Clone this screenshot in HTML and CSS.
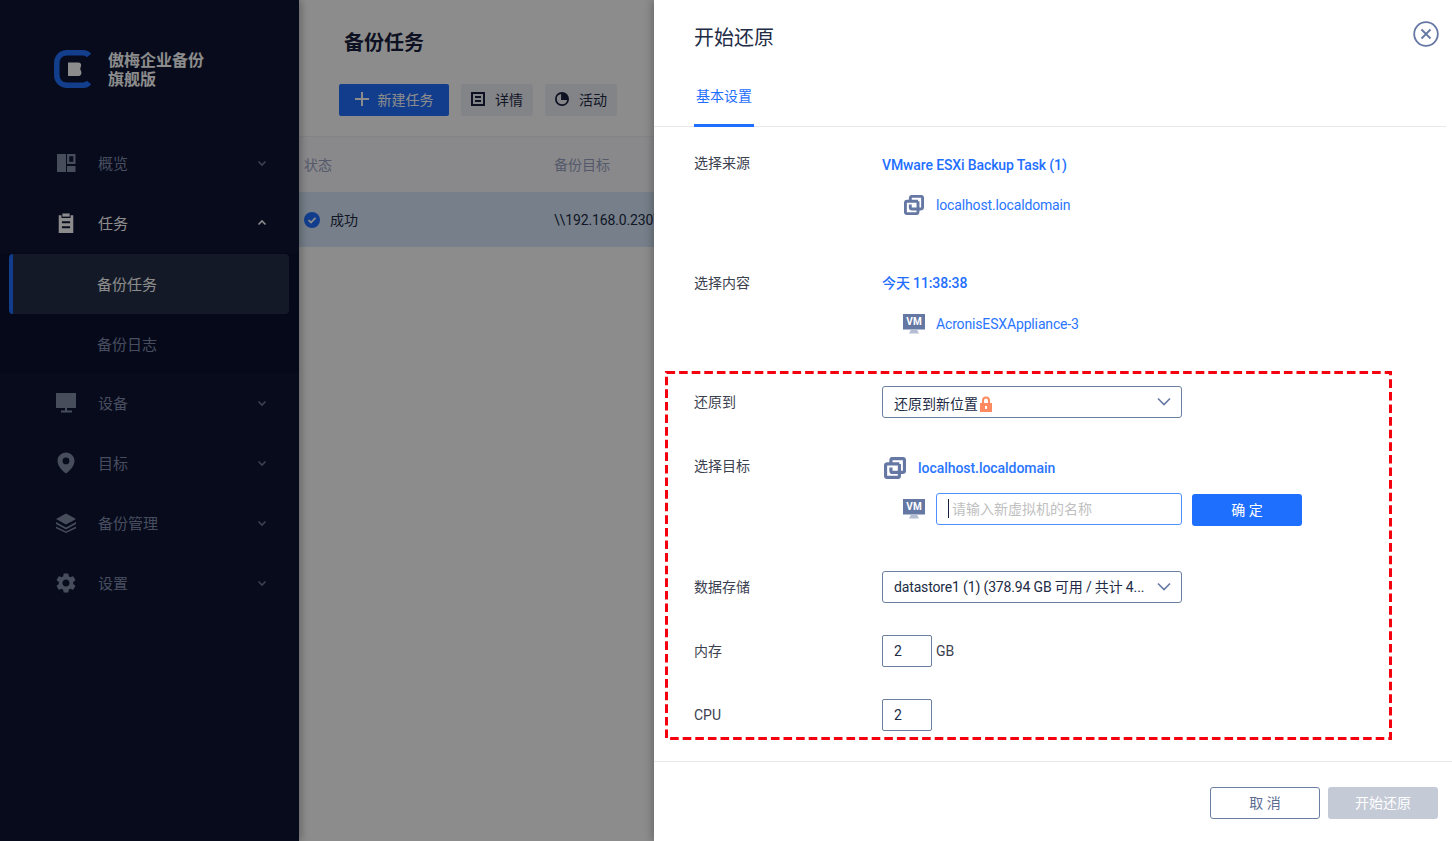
FILE: index.html
```html
<!DOCTYPE html>
<html lang="zh-CN">
<head>
<meta charset="utf-8">
<title>开始还原</title>
<link rel="stylesheet" href="styles.css">
</head>
<body>
<svg class="defs" width="0" height="0">
  <symbol id="chev" viewBox="0 0 12 12"><path d="M2.500 4.500 6 8l3.500-3.500" fill="none" stroke="currentColor" stroke-width="1.600"/></symbol>
  <symbol id="chev-lg" viewBox="0 0 14 14"><path d="M1 3.500 7 9.500l6-6" fill="none" stroke="currentColor" stroke-width="1.600"/></symbol>
  <symbol id="server" viewBox="0 0 20 20"><g fill="none" stroke="#6577a3" stroke-width="2.900" stroke-linejoin="round"><path d="M14 6.300H3a1.600 1.600 0 0 0-1.600 1.600V17a1.600 1.600 0 0 0 1.600 1.600h9.400A1.600 1.600 0 0 0 14 17V6.300"/><path d="M6.300 6V3a1.600 1.600 0 0 1 1.600-1.600H17A1.600 1.600 0 0 1 18.600 3v9.500A1.600 1.600 0 0 1 17 14H7.900a1.600 1.600 0 0 1-1.600-1.600V9.500"/></g></symbol>
  <symbol id="vm" viewBox="0 0 22 20"><rect width="22" height="15.500" fill="#6577a3"/><path d="M8 15.500h6l2 4H6Z" fill="#b4bdd3"/></symbol>
</svg>
<div class="app">
  <aside class="sidebar">
    <div class="brand">
      <svg class="brand-logo" viewBox="0 0 37 38"><path d="M35 5.500C33.500 3.500 31.500 2.800 29 2.800H13C7 2.800 2.800 7 2.800 13v12c0 6 4.200 10.200 10.200 10.200H29c2.500 0 4.500-.7 6-2.700" fill="none" stroke="#2272ff" stroke-width="5.500"/><path d="M14 12.500h10c2.500 0 3.500 1.500 3 3.500l-.8 3 1 2.500c.8 2.500-.5 4.500-3 4.500H14Z" fill="#fff"/></svg>
      <div class="brand-name">傲梅企业备份<br>旗舰版</div>
    </div>
    <nav class="nav">
      <div class="nav-item">
        <svg class="nav-icon" viewBox="0 0 20 20"><path fill-rule="evenodd" d="M1 1h9v18H1Zm10 0h8.500v10H11Zm2.300 2.300v5.400h4V3.300ZM11 13h8.500v6H11Z"/></svg>
        <span class="nav-text">概览</span>
        <svg class="nav-chev"><use href="#chev"/></svg>
      </div>
      <div class="nav-item is-open">
        <svg class="nav-icon" viewBox="0 0 20 22"><path d="M6 .5h8V4H6Z"/><path fill-rule="evenodd" d="M2 2.500h3V5.500h10V2.500h3V22H2ZM5.500 9v2.400h9V9ZM5.500 14.500v2.400h9v-2.400Z"/></svg>
        <span class="nav-text">任务</span>
        <svg class="nav-chev nav-chev-up"><use href="#chev"/></svg>
      </div>
      <div class="subnav">
        <div class="sub-item is-active">备份任务</div>
        <div class="sub-item">备份日志</div>
      </div>
      <div class="nav-item">
        <svg class="nav-icon" viewBox="0 0 20 20"><path d="M0 0h20v15H11v2.500h5V19.500H5v-2H9V15H0Z"/></svg>
        <span class="nav-text">设备</span>
        <svg class="nav-chev"><use href="#chev"/></svg>
      </div>
      <div class="nav-item">
        <svg class="nav-icon nav-icon-pin" viewBox="0 0 20 22"><path fill-rule="evenodd" d="M10 .5c4.700 0 8.500 3.700 8.500 8.400 0 5-5 9.800-8.500 12.600C6.500 18.700 1.500 13.900 1.500 8.900 1.500 4.200 5.300.5 10 .5Zm0 5a3.400 3.400 0 1 0 0 6.800 3.400 3.400 0 0 0 0-6.800Z"/></svg>
        <span class="nav-text">目标</span>
        <svg class="nav-chev"><use href="#chev"/></svg>
      </div>
      <div class="nav-item">
        <svg class="nav-icon" viewBox="0 0 20 20"><path d="M10 .5l10 5.500-10 5.500L0 6Z"/><path d="M0 9l10 5.500L20 9v2l-10 5.500L0 11Z"/><path d="M0 13.500l10 5 10-5v1.800l-10 4.700L0 15.300Z"/></svg>
        <span class="nav-text">备份管理</span>
        <svg class="nav-chev"><use href="#chev"/></svg>
      </div>
      <div class="nav-item">
        <svg class="nav-icon" viewBox="2.500 2 19 20"><path d="M19.140 12.940c.04-.3.06-.61.06-.94 0-.32-.02-.64-.07-.94l2.030-1.580a.49.49 0 0 0 .12-.61l-1.920-3.320a.49.49 0 0 0-.59-.22l-2.390.96c-.5-.38-1.030-.7-1.620-.94l-.36-2.540a.48.48 0 0 0-.48-.41h-3.840c-.24 0-.43.17-.47.41l-.36 2.540c-.59.24-1.130.57-1.620.94l-2.390-.96c-.22-.08-.47 0-.59.22L2.740 8.870c-.12.21-.08.47.12.61l2.030 1.580c-.05.3-.09.63-.09.94s.02.64.07.94l-2.030 1.580a.49.49 0 0 0-.12.61l1.920 3.320c.12.22.37.29.59.22l2.390-.96c.5.38 1.030.7 1.620.94l.36 2.540c.05.24.24.41.48.41h3.840c.24 0 .44-.17.47-.41l.36-2.540c.59-.24 1.130-.56 1.620-.94l2.390.96c.22.08.47 0 .59-.22l1.920-3.320c.12-.22.07-.47-.12-.61l-2.010-1.580zM12 15.600c-1.980 0-3.600-1.620-3.600-3.600s1.620-3.600 3.600-3.600 3.600 1.620 3.600 3.600-1.620 3.600-3.600 3.600z"/></svg>
        <span class="nav-text">设置</span>
        <svg class="nav-chev"><use href="#chev"/></svg>
      </div>
    </nav>
  </aside>
  <main class="main">
    <h1 class="page-title">备份任务</h1>
    <div class="toolbar">
      <button class="tool tool-primary"><svg class="tool-plus" viewBox="0 0 14 14"><path d="M6 0h2v6h6v2H8v6H6V8H0V6h6Z"/></svg>新建任务</button>
      <button class="tool"><svg class="tool-icon" viewBox="0 0 14 14"><path fill-rule="evenodd" d="M0 0h14v14H0Zm2 2v10h10V2Zm2 2h6v2H4Zm0 4h6v2H4Z"/></svg>详情</button>
      <button class="tool"><svg class="tool-icon" viewBox="0 0 14 14"><path fill-rule="evenodd" d="M7 0a7 7 0 1 1 0 14A7 7 0 0 1 7 0Zm-.9 1.900a5.200 5.200 0 1 0 6 6H6.100Z"/></svg>活动</button>
    </div>
    <div class="thead">
      <div class="col-status">状态</div>
      <div class="col-target">备份目标</div>
    </div>
    <div class="trow">
      <div class="col-status status-ok"><svg class="ok-icon" viewBox="0 0 16 16"><circle cx="8" cy="8" r="8" fill="#1f6fff"/><path d="M4.500 8.200 7 10.500l4.500-4.700" fill="none" stroke="#fff" stroke-width="1.800"/></svg><span class="ok-text">成功</span></div>
      <div class="col-target col-path">\\192.168.0.230\backup</div>
    </div>
  </main>
  <div class="mask"></div>
  <section class="drawer">
    <header class="drawer-head">
      <h2 class="drawer-title">开始还原</h2>
      <svg class="drawer-close" viewBox="0 0 26 26"><circle cx="13" cy="13" r="11.800" fill="none" stroke="#6577a3" stroke-width="1.800"/><path d="M8.500 8.500l9 9m0-9-9 9" fill="none" stroke="#6577a3" stroke-width="1.800"/></svg>
      <div class="tabs"><div class="tab">基本设置</div></div>
    </header>
    <div class="drawer-body">
      <div class="row gap-56">
        <div class="label">选择来源</div>
        <div class="value">
          <div class="link-title title-source">VMware ESXi Backup Task (1)</div>
          <div class="sub-line"><svg class="ic-server"><use href="#server"/></svg><span class="link">localhost.localdomain</span></div>
        </div>
      </div>
      <div class="row gap-51">
        <div class="label">选择内容</div>
        <div class="value">
          <div class="link-title">今天 11:38:38</div>
          <div class="sub-line sub-line-vm"><span class="vm"><svg class="vm-art"><use href="#vm"/></svg><span class="vm-text">VM</span></span><span class="link">AcronisESXAppliance-3</span></div>
        </div>
      </div>
      <div class="row gap-37">
        <div class="label label-ctl">还原到</div>
        <div class="select"><span class="select-text select-text-cjk">还原到新位置<svg class="lock" viewBox="0 0 14 16"><path fill-rule="evenodd" d="M3 7V4.500a4 4 0 0 1 8 0V7h2v9H1V7Zm2 0h4V4.500a2 2 0 0 0-4 0ZM6 10v3h2v-3Z"/></svg></span><svg class="select-chev"><use href="#chev-lg"/></svg></div>
      </div>
      <div class="row gap-46">
        <div class="label">选择目标</div>
        <div class="value">
          <div class="target-host"><svg class="ic-server"><use href="#server"/></svg><span class="link link-strong">localhost.localdomain</span></div>
          <div class="target-name">
            <span class="vm"><svg class="vm-art"><use href="#vm"/></svg><span class="vm-text">VM</span></span>
            <div class="name-field"><input class="name-input" type="text" placeholder="请输入新虚拟机的名称"><span class="caret"></span></div>
            <button class="btn btn-primary">确 定</button>
          </div>
        </div>
      </div>
      <div class="row gap-32">
        <div class="label label-ctl">数据存储</div>
        <div class="select"><span class="select-text select-text-data">datastore1 (1) (378.94 GB 可用 / 共计 4...</span><svg class="select-chev"><use href="#chev-lg"/></svg></div>
      </div>
      <div class="row gap-32">
        <div class="label label-ctl">内存</div>
        <div class="num-line"><div class="num">2</div><span class="unit">GB</span></div>
      </div>
      <div class="row">
        <div class="label label-ctl">CPU</div>
        <div class="num-line"><div class="num">2</div></div>
      </div>
    </div>
    <footer class="drawer-foot">
      <button class="btn btn-ghost">取 消</button>
      <button class="btn btn-disabled">开始还原</button>
    </footer>
    <svg class="callout" viewBox="0 0 727 369"><rect x="1.500" y="1.500" width="724" height="366" fill="none" stroke="#f5000f" stroke-width="3" stroke-dasharray="8.600 4"/></svg>
  </section>
</div>
</body>
</html>
```

FILE: styles.css
```css
* { box-sizing: border-box; }
html, body { margin: 0; height: 100%; overflow: hidden; }
body {
  font-family: Roboto, "Noto Sans CJK SC", sans-serif;
  font-size: 14px;
  color: #222b45;
  background: #fff;
}
h1, h2 { margin: 0; }
button { font: inherit; border: 0; padding: 0; }
.defs { position: absolute; }
.app { display: flex; position: relative; height: 841px; overflow: hidden; }

.sidebar { width: 299px; flex: none; background: #0d1433; color: #828dac; box-shadow: 2px 0 8px rgba(0,0,0,.3); position: relative; }
.brand { height: 133px; padding: 50px 0 0 54px; display: flex; align-items: flex-start; gap: 17px; }
.brand-logo { width: 37px; height: 38px; }
.brand-name { padding-top: 1px; font-size: 16px; font-weight: 700; line-height: 19px; color: #fff; }
.nav-item { height: 60px; display: flex; align-items: center; padding-left: 56px; }
.nav-icon { width: 20px; height: 20px; fill: #838da8; flex: none; }
.nav-icon-pin { height: 22px; }
.nav-text { margin: -2px 0 0 22px; font-size: 15px; flex: 1; }
.nav-chev { width: 12px; height: 12px; margin-right: 31px; color: #6d7690; }
.is-open .nav-icon { fill: #fff; }
.is-open .nav-text { color: #fff; }
.nav-chev-up { transform: rotate(180deg); color: #fff; }
.subnav { height: 120px; padding-top: 1px; background: #0b1130; }
.sub-item { height: 60px; line-height: 62px; padding-left: 97px; font-size: 15px; }
.sub-item.is-active { margin: 0 10px 0 9px; padding-left: 84px; color: #fff; background: #242f45; border-left: 4px solid #1f6fff; border-radius: 4px; }

.main { flex: 1; min-width: 0; }
.page-title { padding: 29px 0 0 45px; font-size: 20px; line-height: 28px; font-weight: 700; color: #181f3e; }
.toolbar { display: flex; gap: 12px; padding: 27px 0 20px 40px; border-bottom: 1px solid #f0f0f5; }
.tool { height: 32px; width: 72px; padding-bottom: 2px; display: flex; align-items: center; justify-content: center; gap: 10px; border-radius: 2px; background: #eff1f8; color: #222b45; font-size: 14px; }
.tool-primary { width: 110px; background: #1f6fff; color: #fff; gap: 9px; }
.tool-plus { width: 14px; height: 14px; fill: #fff; }
.tool-icon { width: 14px; height: 14px; fill: #181f3e; }
.thead, .trow { display: flex; align-items: center; padding-left: 5px; }
.thead { height: 55px; padding-bottom: 2px; background: #fafafe; color: #9aa4c4; }
.trow { height: 55px; background: #d7e8fb; color: #222b45; }
.col-status { width: 250px; flex: none; }
.col-target { white-space: nowrap; }
.col-path { letter-spacing: -.13px; }
.status-ok { display: flex; align-items: center; gap: 10px; }
.ok-icon { width: 16px; height: 16px; }
.ok-text { margin-top: -2px; }

.mask { position: absolute; inset: 0; background: rgba(0,0,0,.45); }

.drawer { position: absolute; top: 0; right: 0; bottom: 0; width: 798px; background: #fff; display: flex; flex-direction: column; box-shadow: -2px 0 8px rgba(0,0,0,.25); }
.drawer-head { position: relative; height: 127px; padding-left: 40px; }
.drawer-head::after { content: ""; position: absolute; left: 0; right: 6px; bottom: 0; height: 1px; background: #e8e8ec; }
.drawer-title { padding-top: 24px; font-size: 20px; line-height: 28px; font-weight: 400; color: #222b45; }
.drawer-close { position: absolute; top: 21px; right: 13px; width: 26px; height: 26px; }
.tabs { margin-top: 30px; }
.tab { position: relative; z-index: 1; width: 60px; height: 45px; padding: 0 2px; line-height: 28px; color: #1f6fff; border-bottom: 3px solid #1f6fff; white-space: nowrap; }
.drawer-body { flex: 1; padding: 25px 0 0 40px; }
.row { display: flex; }
.gap-56 { margin-bottom: 56px; }
.gap-51 { margin-bottom: 51px; }
.gap-37 { margin-bottom: 37px; }
.gap-46 { margin-bottom: 46px; }
.gap-32 { margin-bottom: 32px; }
.label { width: 188px; flex: none; line-height: 22px; color: #3c4150; }
.label-ctl { line-height: 32px; }
.value { flex: 1; }
.link-title { line-height: 22px; font-weight: 500; color: #1f6fff; letter-spacing: -.12px; }
.title-source { margin-top: 2px; }
.link { color: #2a75ff; letter-spacing: -.15px; }
.link-strong { font-weight: 500; letter-spacing: -.05px; }
.sub-line { display: flex; align-items: center; gap: 12px; height: 22px; margin: 18px 0 0 22px; }
.sub-line-vm { margin: 19px 0 0 21px; gap: 11px; }
.ic-server { width: 20px; height: 20px; flex: none; }
.vm { position: relative; width: 22px; height: 20px; flex: none; display: block; }
.vm-art { width: 22px; height: 20px; display: block; }
.vm-text { position: absolute; top: 0; left: 0; width: 22px; text-align: center; font-size: 10px; line-height: 15px; font-weight: 700; color: #fff; }
.select { width: 300px; height: 32px; padding: 0 11px; display: flex; align-items: center; border: 1px solid #6b7fa3; border-radius: 3px; background: #fff; }
.select-text { flex: 1; min-width: 0; white-space: nowrap; }
.select-text-cjk { margin-top: 2px; }
.select-text-data { margin-top: -2px; letter-spacing: -.15px; }
.select-chev { width: 14px; height: 14px; flex: none; color: #6577a3; margin-right: -1px; }
.lock { width: 14px; height: 16px; margin-left: 1px; fill: #ff8a62; vertical-align: -3px; }
.target-host { display: flex; align-items: center; gap: 12px; height: 22px; margin: 2px 0 0 2px; }
.target-host .ic-server { width: 22px; height: 22px; }
.target-name { display: flex; align-items: center; margin: 14px 0 0 21px; height: 32px; }
.target-name .vm { margin-right: 11px; }
.name-field { position: relative; width: 246px; height: 32px; }
.name-input { width: 100%; height: 100%; padding: 0 15px; border: 1px solid #4d90fe; border-radius: 3px; font: inherit; outline: 0; color: #222b45; }
.name-input::placeholder { color: #c0c0c0; opacity: 1; }
.caret { position: absolute; left: 12px; top: 6px; width: 1px; height: 19px; background: #181f3e; }
.btn { width: 110px; height: 32px; padding-bottom: 2px; border-radius: 3px; font-size: 14px; text-align: center; }
.btn-primary { margin-left: 10px; margin-top: 2px; background: #1f6fff; color: #fff; }
.num-line { display: flex; align-items: center; gap: 4px; }
.num { width: 50px; height: 32px; padding-left: 11px; line-height: 30px; border: 1px solid #6b7fa3; border-radius: 2px; }
.unit { color: #3c4150; }
.drawer-foot { height: 80px; flex: none; padding: 25px 14px 0 0; display: flex; justify-content: flex-end; gap: 8px; border-top: 1px solid #e8e8ec; }
.btn-ghost { background: #fff; border: 1px solid #6b7fa3; color: #5b6c92; }
.btn-disabled { background: #c4cad6; color: #fff; }
.callout { position: absolute; left: 11px; top: 371px; width: 727px; height: 369px; }
```
